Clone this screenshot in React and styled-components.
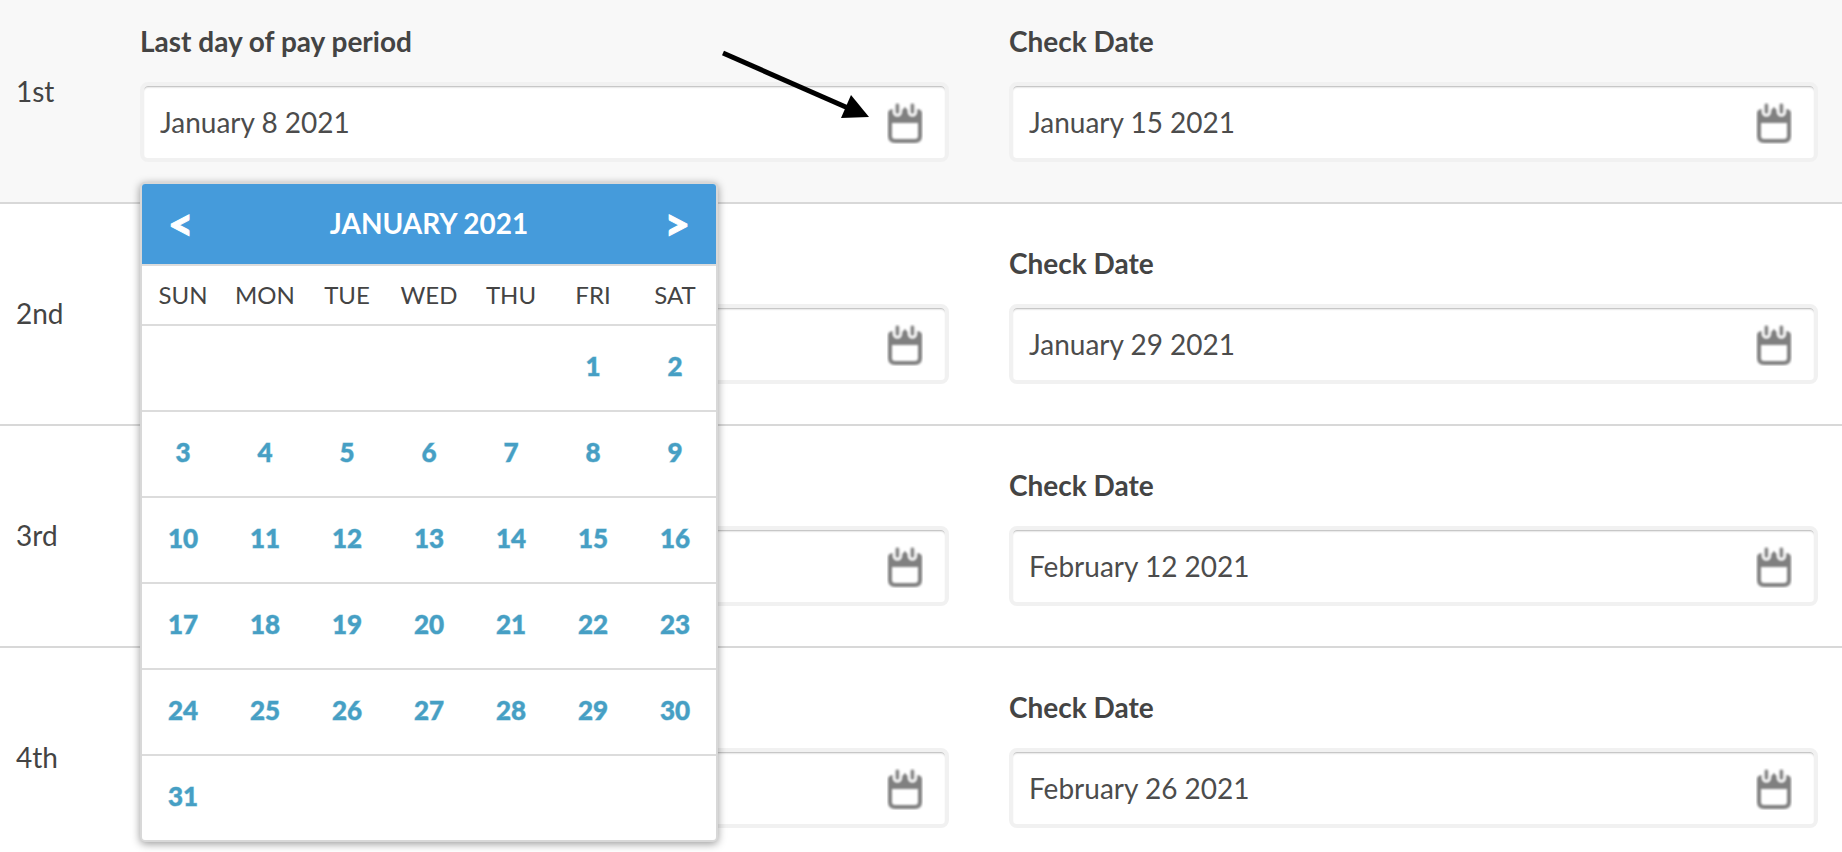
import React, { useState } from "react";
import styled, { createGlobalStyle } from "styled-components";

const periods = [
  { ordinal: "1st", lastDay: "January 8 2021", checkDate: "January 15 2021" },
  { ordinal: "2nd", lastDay: "January 22 2021", checkDate: "January 29 2021" },
  { ordinal: "3rd", lastDay: "February 5 2021", checkDate: "February 12 2021" },
  { ordinal: "4th", lastDay: "February 19 2021", checkDate: "February 26 2021" },
];

const weekdays = ["SUN", "MON", "TUE", "WED", "THU", "FRI", "SAT"];

// January 2021 starts on a Friday
const weeks = Array.from({ length: 6 }, (_, week) =>
  Array.from({ length: 7 }, (_, day) => {
    const date = week * 7 + day - 4;
    return date > 0 && date <= 31 ? date : null;
  })
);

const CalendarIcon = () => (
  <svg width="36" height="42" viewBox="0 0 36 42" aria-hidden="true">
    <defs>
      <filter id="soften" x="-10%" y="-10%" width="120%" height="120%">
        <feGaussianBlur stdDeviation="0.8" />
      </filter>
    </defs>
    <g filter="url(#soften)">
      <path
        fill="#808080"
        fillRule="evenodd"
        d="M1 11 Q1 8 5 7 L15 8 L18 5 L21 8 L31 7 Q35 8 35 11 V34 Q35 41 28 41 H8 Q1 41 1 34 Z M5 21 V34 Q5 37 8 37 H28 Q31 37 31 34 V21 Z"
      />
      <path
        d="M10.400 3 V10 M25.400 3 V10"
        stroke="#fff"
        strokeWidth="9"
        strokeLinecap="round"
      />
      <path
        d="M10.400 3.200 V10 M25.400 3.200 V10"
        stroke="#848484"
        strokeWidth="4"
        strokeLinecap="round"
      />
    </g>
  </svg>
);

const DateField = ({ id, label, value, onToggle, children }) => (
  <Field>
    <Label htmlFor={id}>{label}</Label>
    <InputWrap>
      <DateInput id={id} type="text" defaultValue={value} />
      <PickerButton
        type="button"
        aria-label={`Open calendar for ${label}`}
        onClick={onToggle}
      >
        <CalendarIcon />
      </PickerButton>
      {children}
    </InputWrap>
  </Field>
);

const Calendar = () => (
  <Popup>
    <MonthBar>
      <MonthButton type="button" aria-label="Previous month">
        &lt;
      </MonthButton>
      <MonthName>JANUARY 2021</MonthName>
      <MonthButton type="button" aria-label="Next month">
        &gt;
      </MonthButton>
    </MonthBar>
    <Days>
      <thead>
        <tr>
          {weekdays.map((day) => (
            <Weekday key={day} scope="col">
              {day}
            </Weekday>
          ))}
        </tr>
      </thead>
      <tbody>
        {weeks.map((week, i) => (
          <Week key={i}>
            {week.map((date, j) => (
              <Day key={j}>
                {date && <DayButton type="button">{date}</DayButton>}
              </Day>
            ))}
          </Week>
        ))}
      </tbody>
    </Days>
  </Popup>
);

const App = () => {
  const [open, setOpen] = useState(true);

  return (
    <>
      <GlobalStyle />
      <Page>
        {periods.map((period, i) => (
          <Row key={period.ordinal} $first={i === 0}>
            <Ordinal>{period.ordinal}</Ordinal>
            <DateField
              id={`last-day-${i}`}
              label="Last day of pay period"
              value={period.lastDay}
              onToggle={i === 0 ? () => setOpen(!open) : undefined}
            >
              {i === 0 && (
                <Arrow width="150" height="72" viewBox="0 0 150 72">
                  <path d="M3 4 L128 59" stroke="#000" strokeWidth="5" />
                  <path d="M131 46 L149 68 L121 69 Z" />
                </Arrow>
              )}
              {i === 0 && open && <Calendar />}
            </DateField>
            <DateField
              id={`check-date-${i}`}
              label="Check Date"
              value={period.checkDate}
            />
          </Row>
        ))}
      </Page>
    </>
  );
};

const GlobalStyle = createGlobalStyle`
  * {
    box-sizing: border-box;
  }
  body {
    margin: 0;
    background: #fff;
    color: #444;
    font-family: Lato, "Liberation Sans", sans-serif;
    font-size: 28px;
    line-height: 34px;
  }
  button, input {
    font: inherit;
    color: inherit;
  }
  button {
    padding: 0;
    border: 0;
    background: none;
    cursor: pointer;
  }
`;

const Page = styled.main`
  height: 100vh;
  overflow: hidden;
`;

const Row = styled.section`
  display: grid;
  grid-template-columns: 80px 1fr 1fr;
  column-gap: 60px;
  padding: ${({ $first }) => ($first ? "24px" : "42px")} 24px 40px 0;
  border-bottom: 2px solid #d8d8d8;
  background: ${({ $first }) => ($first ? "#f8f8f8" : "#fff")};
`;

const Ordinal = styled.div`
  padding: 50px 0 0 16px;
`;

const Field = styled.div`
  display: flex;
  flex-direction: column;
  gap: 24px;
  min-width: 0;
`;

const Label = styled.label`
  font-weight: bold;
`;

const InputWrap = styled.div`
  position: relative;
  display: flex;
`;

const DateInput = styled.input`
  flex: 1;
  min-width: 0;
  height: 80px;
  padding: 0 80px 1px 16px;
  border: 4px solid #f1f1f1;
  border-radius: 8px;
  background: #fff;
  box-shadow: inset 0 2px 2px -1px rgba(0, 0, 0, 0.3);
  color: #4c4c4c;
  outline: none;
`;

const PickerButton = styled.button`
  position: absolute;
  top: 20px;
  right: 26px;
  display: flex;
`;

const Arrow = styled.svg`
  position: absolute;
  top: -33px;
  right: 79px;
  pointer-events: none;
`;

const Popup = styled.div`
  position: absolute;
  top: 100px;
  left: 0;
  z-index: 1;
  width: 578px;
  border: 2px solid #d8d8d8;
  border-radius: 5px;
  background: #fff;
  box-shadow: 0 2px 8px rgba(0, 0, 0, 0.4);
`;

const MonthBar = styled.div`
  display: flex;
  justify-content: space-between;
  align-items: center;
  height: 82px;
  padding: 0 26px 2px;
  border-bottom: 2px solid #dcdcdc;
  border-radius: 3px 3px 0 0;
  background: #459bdb;
  color: #fff;
`;

const MonthName = styled.div`
  font-weight: bold;
`;

const MonthButton = styled.button`
  font-size: 44px;
  font-weight: 900;
  -webkit-text-stroke: 1px currentColor;
`;

const Days = styled.table`
  width: 100%;
  border-spacing: 0;
  table-layout: fixed;
`;

const Weekday = styled.th`
  height: 60px;
  padding: 0;
  border-bottom: 2px solid #dcdcdc;
  font-size: 24px;
  font-weight: normal;
`;

const Day = styled.td`
  height: 86px;
  padding: 0 0 5px;
  border-bottom: 2px solid #dcdcdc;
`;

const Week = styled.tr`
  &:last-child ${Day} {
    height: 84px;
    border-bottom: 0;
  }
`;

const DayButton = styled.button`
  display: block;
  width: 100%;
  color: #469fc4;
  font-size: 26px;
  font-weight: 900;
  -webkit-text-stroke: 1px rgba(70, 159, 196, 0.5);
`;

export default App;
